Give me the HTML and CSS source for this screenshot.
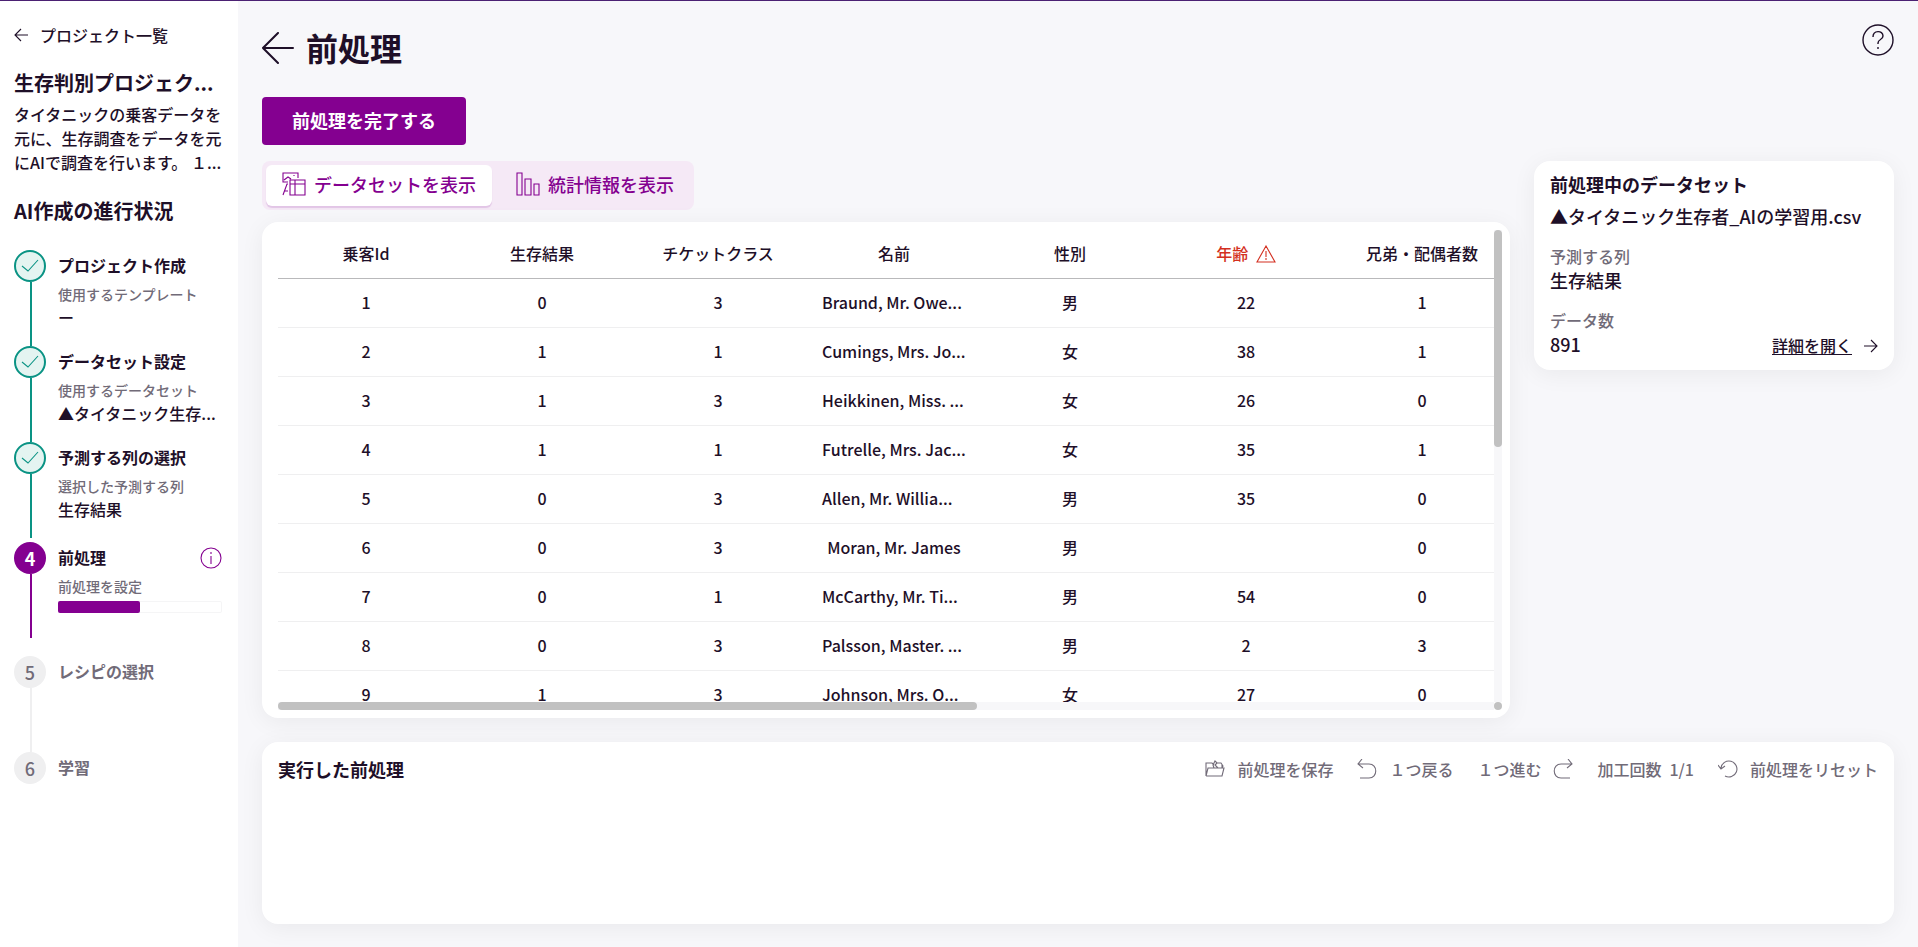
FILE: index.html
```html
<!DOCTYPE html>
<html lang="ja">
<head>
  <meta charset="UTF-8">
  <meta name="viewport" content="width=device-width, initial-scale=1">
  <title>前処理</title>
  <link rel="stylesheet" href="styles.css">
</head>
<body>

<aside class="sidebar">
  <a class="back-link" href="#">
    <svg width="14" height="14" viewBox="0 0 14 14"><path d="M7 1L1 7l6 6M1 7h13"/></svg>
    プロジェクト一覧
  </a>
  <h2 class="project-title">生存判別プロジェク...</h2>
  <p class="project-desc">タイタニックの乗客データを元に、生存調査をデータを元にAIで調査を行います。 １...</p>

  <h2 class="progress-title">AI作成の進行状況</h2>
  <ol class="steps">
    <li class="step done">
      <div class="marker">
        <span class="circle"><svg width="18" height="14" viewBox="0 0 18 14"><path d="M1 7l6 5L17 1"/></svg></span>
        <span class="line"></span>
      </div>
      <div class="step-body">
        <h3>プロジェクト作成</h3>
        <p class="step-label">使用するテンプレート</p>
        <p class="step-value">ー</p>
      </div>
    </li>
    <li class="step done">
      <div class="marker">
        <span class="circle"><svg width="18" height="14" viewBox="0 0 18 14"><path d="M1 7l6 5L17 1"/></svg></span>
        <span class="line"></span>
      </div>
      <div class="step-body">
        <h3>データセット設定</h3>
        <p class="step-label">使用するデータセット</p>
        <p class="step-value">▲タイタニック生存...</p>
      </div>
    </li>
    <li class="step done before-current">
      <div class="marker">
        <span class="circle"><svg width="18" height="14" viewBox="0 0 18 14"><path d="M1 7l6 5L17 1"/></svg></span>
        <span class="line"></span>
      </div>
      <div class="step-body">
        <h3>予測する列の選択</h3>
        <p class="step-label">選択した予測する列</p>
        <p class="step-value">生存結果</p>
      </div>
    </li>
    <li class="step current">
      <div class="marker">
        <span class="circle">4</span>
        <span class="line"></span>
      </div>
      <div class="step-body">
        <div class="step-head">
          <h3>前処理</h3>
          <button class="info-btn" type="button" aria-label="情報">
            <svg width="22" height="22" viewBox="0 0 22 22"><circle cx="11" cy="11" r="10"/><path d="M11 9v8M11 5v2"/></svg>
          </button>
        </div>
        <p class="step-label">前処理を設定</p>
        <div class="bar"><div class="bar-fill" style="width: 50%"></div></div>
      </div>
    </li>
    <li class="step">
      <div class="marker">
        <span class="circle">5</span>
        <span class="line"></span>
      </div>
      <div class="step-body"><h3>レシピの選択</h3></div>
    </li>
    <li class="step">
      <div class="marker"><span class="circle">6</span></div>
      <div class="step-body"><h3>学習</h3></div>
    </li>
  </ol>
</aside>

<main class="main">
  <header class="page-header">
    <a class="page-back" href="#" aria-label="戻る">
      <svg width="32" height="32" viewBox="0 0 32 32"><path d="M16 1L1 16l15 15M1 16h30"/></svg>
    </a>
    <h1>前処理</h1>
    <button class="help-btn" type="button" aria-label="ヘルプ">
      <svg width="32" height="32" viewBox="0 0 32 32"><circle cx="16" cy="16" r="15"/><path d="M11 13c0-7 10-7 10-1 0 4-5 3-5 7v1M16 23v2"/></svg>
    </button>
  </header>

  <button class="complete-btn" type="button">前処理を完了する</button>

  <div class="content">
    <div class="data-area">
      <div class="tabs">
        <button class="tab active" type="button">
          <svg width="24" height="24" viewBox="0 0 24 24"><path d="M6 10H1V1h15v5M2 8l4-3 3 2M12 3v1M1 23l4-11h1M3 19h3M8 8h15v15H8zM8 12h15M13 8v15"/></svg>
          データセットを表示
        </button>
        <button class="tab" type="button">
          <svg width="24" height="24" viewBox="0 0 24 24"><path d="M1 1h5v22H1zM9 7h6v16H9zM18 12h5v11h-5z"/></svg>
          統計情報を表示
        </button>
      </div>

      <div class="card table-card">
        <div class="table-wrap">
          <table>
            <thead>
              <tr>
                <th>乗客Id</th>
                <th>生存結果</th>
                <th>チケットクラス</th>
                <th>名前</th>
                <th>性別</th>
                <th class="warn">
                  年齢
                  <svg width="20" height="18" viewBox="0 0 20 18"><path d="M10 1L1 17h18zM10 6v6M10 13v2"/></svg>
                </th>
                <th>兄弟・配偶者数</th>
              </tr>
            </thead>
            <tbody>
              <tr><td>1</td><td>0</td><td>3</td><td class="clipped">Braund, Mr. Owe...</td><td>男</td><td>22</td><td>1</td></tr>
              <tr><td>2</td><td>1</td><td>1</td><td class="clipped">Cumings, Mrs. Jo...</td><td>女</td><td>38</td><td>1</td></tr>
              <tr><td>3</td><td>1</td><td>3</td><td class="clipped">Heikkinen, Miss. ...</td><td>女</td><td>26</td><td>0</td></tr>
              <tr><td>4</td><td>1</td><td>1</td><td class="clipped">Futrelle, Mrs. Jac...</td><td>女</td><td>35</td><td>1</td></tr>
              <tr><td>5</td><td>0</td><td>3</td><td class="clipped">Allen, Mr. Willia...</td><td>男</td><td>35</td><td>0</td></tr>
              <tr><td>6</td><td>0</td><td>3</td><td>Moran, Mr. James</td><td>男</td><td></td><td>0</td></tr>
              <tr><td>7</td><td>0</td><td>1</td><td class="clipped">McCarthy, Mr. Ti...</td><td>男</td><td>54</td><td>0</td></tr>
              <tr><td>8</td><td>0</td><td>3</td><td class="clipped">Palsson, Master. ...</td><td>男</td><td>2</td><td>3</td></tr>
              <tr><td>9</td><td>1</td><td>3</td><td class="clipped">Johnson, Mrs. O...</td><td>女</td><td>27</td><td>0</td></tr>
            </tbody>
          </table>
        </div>
        <div class="scroll-v"><div class="thumb"></div></div>
        <div class="scroll-h"><div class="thumb"></div></div>
        <div class="scroll-corner"></div>
      </div>
    </div>

    <section class="card dataset-card">
      <h2>前処理中のデータセット</h2>
      <p class="file-name">▲タイタニック生存者_AIの学習用.csv</p>
      <dl>
        <dt>予測する列</dt>
        <dd>生存結果</dd>
        <dt>データ数</dt>
        <dd class="count-row">
          891
          <a class="detail-link" href="#">
            <span>詳細を開く</span>
            <svg width="14" height="14" viewBox="0 0 14 14"><path d="M7 1l6 6-6 6M13 7H0"/></svg>
          </a>
        </dd>
      </dl>
    </section>
  </div>

  <section class="card history-card">
    <h2>実行した前処理</h2>
    <div class="toolbar">
      <button type="button">
        <svg width="20" height="20" viewBox="0 0 20 20"><path d="M1 17V4h6l2 2M1 17h16l2-8H3L1 17M17 9V6M9 9L8 6l2-4 2 2h4l2 3-1 2M12 4l-2 2 3 3"/></svg>
        前処理を保存
      </button>
      <button type="button">
        <svg width="20" height="20" viewBox="0 0 20 20"><path d="M5 0L1 5l5 4M1 5h11c9 0 9 14 0 14H3"/></svg>
        １つ戻る
      </button>
      <button type="button">
        １つ進む
        <svg width="20" height="20" viewBox="0 0 20 20"><path d="M15 0l4 5-5 4M19 5H8c-9 0-9 14 0 14h9"/></svg>
      </button>
      <p class="count"><span>加工回数</span><span>1/1</span></p>
      <button type="button">
        <svg width="20" height="20" viewBox="0 0 20 20"><path d="M3 9a8 8 0 1 1 4 8M0 6l3 4 4-3"/></svg>
        前処理をリセット
      </button>
    </div>
  </section>
</main>

</body>
</html>
```
FILE: styles.css
```css
* {
  box-sizing: border-box;
}

body {
  margin: 0;
  min-height: 100vh;
  display: flex;
  border-top: 1px solid #4b2173;
  background: #f7f7fa;
  color: #1e0f28;
  font-family: "Noto Sans CJK JP", sans-serif;
  font-size: 16px;
  font-weight: 500;
  line-height: 24px;
}

h1, h2, h3, p, ol, dl, dd {
  margin: 0;
  padding: 0;
}

h1, h2, h3 {
  font-weight: 700;
}

a {
  color: inherit;
  text-decoration: none;
}

button {
  padding: 0;
  border: none;
  background: none;
  color: inherit;
  font: inherit;
  cursor: pointer;
}

svg {
  display: block;
  flex: none;
  fill: none;
  stroke: currentColor;
  stroke-width: 1.1;
}

/* sidebar */
.sidebar {
  width: 238px;
  flex: none;
  padding: 22px 16px 0 14px;
  background: #fff;
}

.back-link {
  display: flex;
  align-items: center;
  gap: 12px;
}

.project-title {
  margin-top: 20px;
  font-size: 20px;
  line-height: 32px;
  white-space: nowrap;
}

.project-desc {
  margin-top: 3px;
}

.progress-title {
  margin-top: 21px;
  font-size: 20px;
  line-height: 32px;
}

.steps {
  margin-top: 23px;
  list-style: none;
}

.step {
  display: flex;
  gap: 12px;
  min-height: 96px;
  color: #716b78;
}

.marker {
  display: flex;
  flex-direction: column;
  align-items: center;
  width: 32px;
  flex: none;
}

.circle {
  display: flex;
  align-items: center;
  justify-content: center;
  width: 32px;
  height: 32px;
  padding-bottom: 1px;
  border-radius: 50%;
  background: #efeff0;
  font-size: 18px;
}

.line {
  flex: 1;
  width: 2px;
  margin-left: 2px;
  background: #efeff0;
}

.step-body {
  flex: 1;
  min-width: 0;
}

.step h3 {
  margin-bottom: 2px;
  font-size: 16px;
  line-height: 30px;
}

.step-label {
  color: #716b78;
  font-size: 14px;
}

.step-value {
  line-height: 22px;
  white-space: nowrap;
}

.done, .current {
  color: #1e0f28;
}

.done .circle {
  border: 2px solid #0a9384;
  background: #e4f4f1;
  color: #0a9384;
}

.done .line {
  background: #0a9384;
}

.before-current {
  margin-bottom: 4px;
}

.current {
  margin-bottom: 18px;
}

.current .circle {
  background: #840090;
  color: #fff;
  font-weight: 700;
}

.current .line {
  background: #840090;
}

.step-head {
  display: flex;
  align-items: center;
  justify-content: space-between;
}

.info-btn {
  color: #840090;
}

.bar {
  height: 12px;
  margin-top: 3px;
  border-radius: 2px;
  box-shadow: inset 0 0 0 1px #f5f5f6;
}

.bar-fill {
  height: 12px;
  border-radius: 2px;
  background: #840090;
}

/* main */
.main {
  flex: 1;
  min-width: 0;
  display: flex;
  flex-direction: column;
  padding: 23px 24px;
}

.page-header {
  display: flex;
  align-items: center;
  gap: 12px;
  height: 48px;
}

.page-header h1 {
  padding-bottom: 2px;
  font-size: 32px;
  line-height: 46px;
}

.page-back svg {
  stroke-width: 2;
  stroke-linecap: round;
}

.help-btn {
  align-self: flex-start;
  margin-left: auto;
}

.help-btn svg {
  stroke-width: 1.4;
}

.complete-btn {
  align-self: flex-start;
  height: 48px;
  margin-top: 25px;
  padding: 0 30px 3px;
  border-radius: 4px;
  background: #840090;
  color: #fff;
  font-size: 18px;
  font-weight: 700;
}

.content {
  flex: 1;
  display: flex;
  align-items: flex-start;
  gap: 24px;
  margin-top: 16px;
}

.data-area {
  flex: 1;
  min-width: 0;
  align-self: stretch;
  display: flex;
  flex-direction: column;
  align-items: flex-start;
}

.tabs {
  display: flex;
  padding: 4px;
  border-radius: 8px;
  background: #f5e9f6;
}

.tab {
  display: flex;
  align-items: center;
  gap: 8px;
  height: 41px;
  padding: 0 16px 3px;
  border-radius: 6px;
  color: #840090;
  font-size: 18px;
}

.tab + .tab {
  padding-left: 24px;
}

.tab.active {
  background: #fff;
  box-shadow: 0 2px 1px #e2c5e6;
}

.card {
  border-radius: 16px;
  background: #fff;
  box-shadow: 0 4px 24px rgba(0, 0, 0, 0.06);
}

.table-card {
  flex: 1;
  width: 100%;
  margin-top: 12px;
  padding: 8px 8px 8px 16px;
  display: grid;
  grid-template-columns: minmax(0, 1fr) 8px;
  grid-template-rows: minmax(0, 1fr) 8px;
}

.table-wrap {
  height: 0;
  min-height: 100%;
  overflow: hidden;
}

table {
  width: 1232px;
  table-layout: fixed;
  border-collapse: separate;
  border-spacing: 0;
  text-align: center;
}

th, td {
  height: 49px;
  padding: 0 0 2px;
  border-bottom: 1px solid #efeff0;
  font-weight: 500;
  white-space: nowrap;
}

th {
  border-bottom-color: #b9b9bb;
}

.clipped {
  padding-left: 16px;
  text-align: left;
}

.warn {
  color: #d32f20;
}

.warn svg {
  display: inline-block;
  margin-left: 4px;
  vertical-align: -3px;
}

.scroll-v, .scroll-h {
  background: #f7f7f9;
}

.thumb, .scroll-corner {
  border-radius: 4px;
  background: #c1c1c1;
}

.scroll-v .thumb {
  width: 8px;
  height: 46%;
}

.scroll-h .thumb {
  width: 57.5%;
  height: 8px;
}

.dataset-card {
  width: 360px;
  flex: none;
  padding: 7px 16px 14px;
  font-size: 18px;
}

.dataset-card h2 {
  font-size: 18px;
  line-height: 32px;
}

.file-name {
  line-height: 32px;
}

.dataset-card dt {
  margin-top: 16px;
  color: #716b78;
  font-size: 16px;
}

.file-name + dl dt:first-child {
  margin-top: 12px;
}

.count-row {
  display: flex;
  justify-content: space-between;
}

.detail-link {
  display: flex;
  align-items: center;
  gap: 12px;
  padding-top: 3px;
  font-size: 16px;
}

.detail-link span {
  border-bottom: 1px solid #1e0f28;
  line-height: 18px;
}

.history-card {
  display: flex;
  align-items: flex-start;
  justify-content: space-between;
  min-height: 182px;
  margin-top: 24px;
  padding: 15px 16px;
}

.history-card h2 {
  font-size: 18px;
}

.toolbar {
  display: flex;
  align-items: center;
  gap: 24px;
  color: #716b78;
}

.toolbar button {
  display: flex;
  align-items: center;
  gap: 12px;
}

.count {
  display: flex;
  gap: 8px;
}
```
